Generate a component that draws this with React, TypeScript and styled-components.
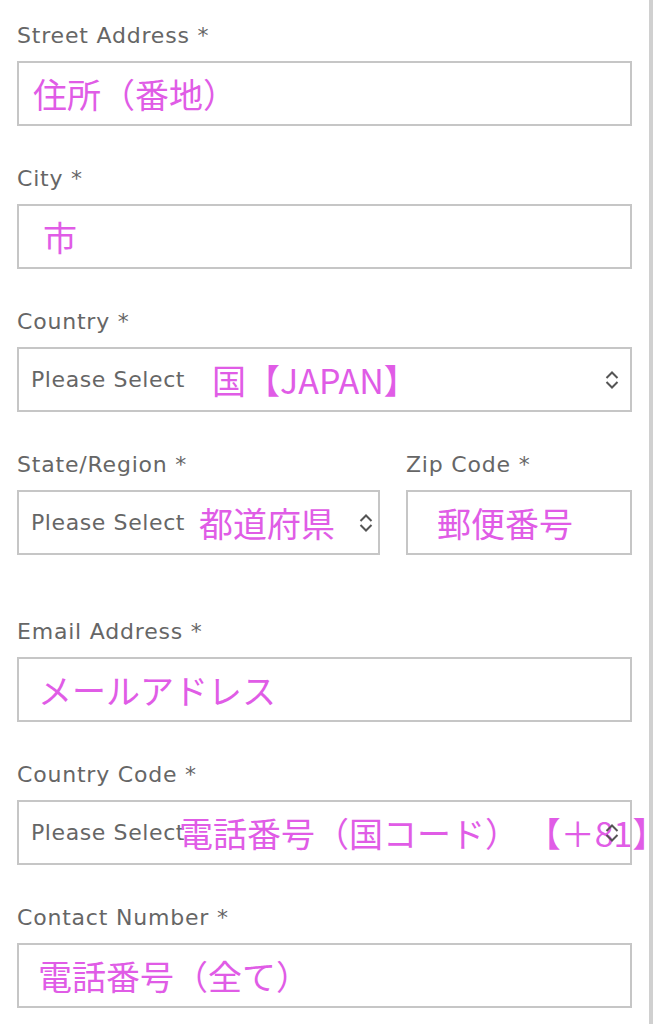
import React from 'react'
import styled, { createGlobalStyle } from 'styled-components'

const GlobalStyle = createGlobalStyle`
  html, body {
    margin: 0;
    padding: 0;
    background: #ffffff;
    overflow-x: hidden;
  }
`

const Page = styled.div`
  width: 653px;
  min-height: 1024px;
  box-sizing: border-box;
  padding: 24px 17px 0 17px;
  border-right: 4px solid #d0d0d0;
  background: #ffffff;
`
const Form = styled.form`
  display: flex;
  flex-direction: column;
  width: 615px;
`
const Field = styled.div<{ $after?: number }>`
  display: flex;
  flex-direction: column;
  margin-bottom: ${({ $after }) => ($after ?? 41)}px;
  min-width: 0;
`
const Row = styled.div<{ $after?: number }>`
  display: grid;
  grid-template-columns: 363px 1fr;
  column-gap: 26px;
  margin-bottom: ${({ $after }) => ($after ?? 41)}px;

  & > ${Field} {
    margin-bottom: 0;
  }
`
const Label = styled.label`
  font-family: 'DejaVu Sans', Verdana, sans-serif;
  font-size: 22px;
  letter-spacing: 0.8px;
  line-height: 24px;
  color: #666666;
  margin-bottom: 13px;
  white-space: nowrap;
`
const Box = styled.div`
  position: relative;
  height: 65px;
  box-sizing: border-box;
  border: 2px solid #c6c6c6;
  background: #ffffff;
  display: flex;
  align-items: center;
  padding-left: 12px;
  overflow: visible;
`
const Placeholder = styled.span`
  font-family: 'DejaVu Sans', Verdana, sans-serif;
  font-size: 22px;
  letter-spacing: 0.6px;
  color: #666666;
  white-space: nowrap;
`
const Note = styled.span<{ $indent: number }>`
  font-family: 'Noto Sans CJK JP', 'Noto Sans', sans-serif;
  font-size: 34px;
  line-height: 1;
  color: #e05ce6;
  white-space: pre;
  margin-left: ${({ $indent }) => $indent}px;
  position: relative;
  z-index: 1;
`
const Arrow = styled.svg<{ $right: number }>`
  position: absolute;
  right: ${({ $right }) => $right}px;
  top: 50%;
  transform: translateY(-50%);
  width: 14px;
  height: 20px;
  z-index: 2;
`

function Chevrons({ right }: { right: number }) {
  return (
    <Arrow $right={right} viewBox="0 0 14 20" fill="none" stroke="#555" strokeWidth="2">
      <path d="M1.5 8 L7 2.5 L12.5 8" />
      <path d="M1.5 12 L7 17.5 L12.5 12" />
    </Arrow>
  )
}

type TSelectProps = {
  note: string
  gap: number
  arrow: number
}
function SelectBox({ note, gap, arrow }: TSelectProps) {
  return (
    <Box>
      <Placeholder>Please Select</Placeholder>
      <Note $indent={gap}>{note}</Note>
      <Chevrons right={arrow} />
    </Box>
  )
}

function App() {
  return (
    <Page>
      <GlobalStyle />
      <Form>
        <Field>
          <Label>Street Address *</Label>
          <Box>
            <Note $indent={2}>住所（番地）</Note>
          </Box>
        </Field>

        <Field>
          <Label>City *</Label>
          <Box>
            <Note $indent={12}>市</Note>
          </Box>
        </Field>

        <Field>
          <Label>Country *</Label>
          <SelectBox note="国【JAPAN】" gap={27} arrow={11} />
        </Field>

        <Row $after={65}>
          <Field>
            <Label>State/Region *</Label>
            <SelectBox note="都道府県" gap={14} arrow={5} />
          </Field>
          <Field>
            <Label>Zip Code *</Label>
            <Box>
              <Note $indent={17}>郵便番号</Note>
            </Box>
          </Field>
        </Row>

        <Field>
          <Label>Email Address *</Label>
          <Box>
            <Note $indent={7}>メールアドレス</Note>
          </Box>
        </Field>

        <Field>
          <Label>Country Code *</Label>
          <SelectBox note="電話番号（国コード） 【＋81】" gap={-6} arrow={11} />
        </Field>

        <Field>
          <Label>Contact Number *</Label>
          <Box>
            <Note $indent={7}>電話番号（全て）</Note>
          </Box>
        </Field>
      </Form>
    </Page>
  )
}

export default App
